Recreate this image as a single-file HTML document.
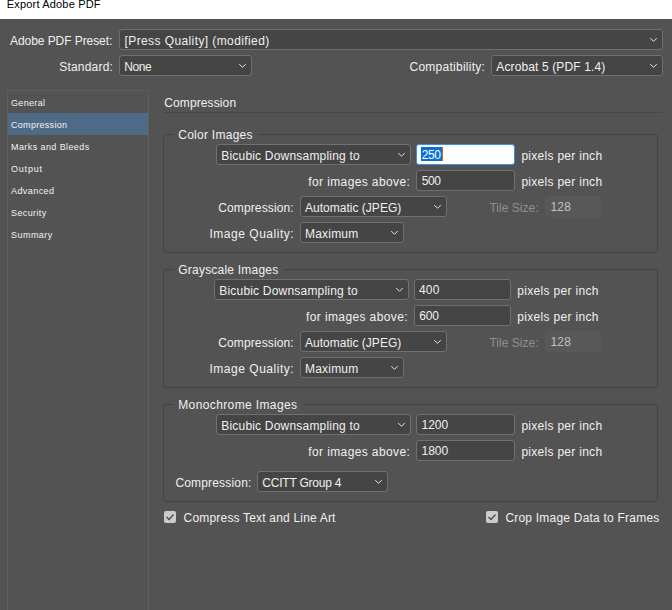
<!DOCTYPE html>
<html><head><meta charset="utf-8">
<style>
*{margin:0;padding:0;box-sizing:border-box}
html,body{width:672px;height:610px;overflow:hidden;background:#535353;font-family:"Liberation Sans",sans-serif}
.a{position:absolute}
.t{position:absolute;white-space:nowrap}
.dd{position:absolute;background:#454545;border:1px solid #707070;border-radius:3px}
.focus{background:#fff;border:1px solid #3d8fef;border-radius:3px}
.dis{background:#585858;border-radius:3px}
.grp{position:absolute;border:1px solid #444444;border-radius:3px}
.side{border:1px solid #5e5e5e;background:#535353}
.cb{position:absolute;width:12px;height:12px;background:#cbcbcb;border-radius:2px}
</style></head><body>
<div class="a" style="left:0;top:0;width:672px;height:19px;background:#fff"></div>
<div class="dd" style="left:119px;top:29px;width:544px;height:21px"></div>
<div class="dd" style="left:119px;top:55px;width:133px;height:21px"></div>
<div class="dd" style="left:491px;top:55px;width:172px;height:21px"></div>
<div class="a side" style="left:7px;top:90px;width:142px;height:530px"></div>
<div class="a" style="left:8px;top:113px;width:140px;height:22px;background:#4f6a87"></div>
<div class="a" style="left:163px;top:112px;width:500px;height:1px;background:#484848"></div>
<div class="grp" style="left:163px;top:134px;width:495px;height:119px"></div>
<div class="a" style="left:174px;top:132px;width:84px;height:4px;background:#535353"></div>
<div class="dd" style="left:216px;top:144px;width:195px;height:21px"></div>
<div class="a focus" style="left:416px;top:144px;width:99px;height:21px"></div>
<div class="a" style="left:421px;top:147px;width:21px;height:14px;background:#0a70d8"></div>
<div class="a" style="left:442px;top:147px;width:1px;height:14px;background:#d66a1a"></div>
<div class="dd" style="left:416px;top:170px;width:99px;height:21px"></div>
<div class="dd" style="left:300px;top:196px;width:147px;height:21px"></div>
<div class="a dis" style="left:545px;top:196px;width:56px;height:21px"></div>
<div class="dd" style="left:300px;top:222px;width:104px;height:21px"></div>
<div class="grp" style="left:163px;top:269px;width:495px;height:119px"></div>
<div class="a" style="left:174px;top:267px;width:110px;height:4px;background:#535353"></div>
<div class="dd" style="left:214px;top:279px;width:195px;height:21px"></div>
<div class="dd" style="left:414px;top:279px;width:97px;height:21px"></div>
<div class="dd" style="left:414px;top:305px;width:97px;height:21px"></div>
<div class="dd" style="left:300px;top:331px;width:147px;height:21px"></div>
<div class="a dis" style="left:545px;top:331px;width:56px;height:21px"></div>
<div class="dd" style="left:300px;top:357px;width:104px;height:21px"></div>
<div class="grp" style="left:163px;top:404px;width:495px;height:98px"></div>
<div class="a" style="left:174px;top:402px;width:129px;height:4px;background:#535353"></div>
<div class="dd" style="left:216px;top:414px;width:195px;height:21px"></div>
<div class="dd" style="left:416px;top:414px;width:99px;height:21px"></div>
<div class="dd" style="left:416px;top:440px;width:99px;height:21px"></div>
<div class="dd" style="left:257px;top:471px;width:131px;height:21px"></div>
<div class="cb" style="left:164px;top:511px"></div>
<div class="cb" style="left:486px;top:511px"></div>
<div class="t" style="left:6.80px;top:-1px;font-size:11px;line-height:11px;letter-spacing:0.174px;color:#000">Export Adobe PDF</div>
<div class="t" style="left:10.00px;top:35px;font-size:12px;line-height:12px;letter-spacing:-0.066px;color:#f0f0f0">Adobe PDF Preset:</div>
<div class="t" style="left:124.50px;top:35px;font-size:12px;line-height:12px;letter-spacing:0.402px;color:#f0f0f0">[Press Quality] (modified)</div>
<div class="t" style="left:59.30px;top:61px;font-size:12px;line-height:12px;letter-spacing:0.187px;color:#f0f0f0">Standard:</div>
<div class="t" style="left:124.25px;top:61px;font-size:12px;line-height:12px;letter-spacing:-0.421px;color:#f0f0f0">None</div>
<div class="t" style="left:409.50px;top:61px;font-size:12px;line-height:12px;letter-spacing:0.255px;color:#f0f0f0">Compatibility:</div>
<div class="t" style="left:496.25px;top:61px;font-size:12px;line-height:12px;letter-spacing:0.127px;color:#f0f0f0">Acrobat 5 (PDF 1.4)</div>
<div class="t" style="left:11.00px;top:99px;font-size:9px;line-height:9px;letter-spacing:0.330px;color:#f2f2f2">General</div>
<div class="t" style="left:11.00px;top:121px;font-size:9px;line-height:9px;letter-spacing:0.299px;color:#f2f2f2">Compression</div>
<div class="t" style="left:11.00px;top:143px;font-size:9px;line-height:9px;letter-spacing:0.411px;color:#f2f2f2">Marks and Bleeds</div>
<div class="t" style="left:11.00px;top:165px;font-size:9px;line-height:9px;letter-spacing:0.797px;color:#f2f2f2">Output</div>
<div class="t" style="left:11.00px;top:187px;font-size:9px;line-height:9px;letter-spacing:0.425px;color:#f2f2f2">Advanced</div>
<div class="t" style="left:11.00px;top:209px;font-size:9px;line-height:9px;letter-spacing:0.384px;color:#f2f2f2">Security</div>
<div class="t" style="left:11.00px;top:231px;font-size:9px;line-height:9px;letter-spacing:0.466px;color:#f2f2f2">Summary</div>
<div class="t" style="left:164.30px;top:97px;font-size:12px;line-height:12px;letter-spacing:0.108px;color:#f0f0f0">Compression</div>
<div class="t" style="left:178.25px;top:129px;font-size:12px;line-height:12px;letter-spacing:0.263px;color:#f0f0f0">Color Images</div>
<div class="t" style="left:221.25px;top:150px;font-size:12px;line-height:12px;letter-spacing:0.198px;color:#f0f0f0">Bicubic Downsampling to</div>
<div class="t" style="left:421.75px;top:149px;font-size:12px;line-height:12px;letter-spacing:-0.424px;color:#ffffff">250</div>
<div class="t" style="left:521.40px;top:150px;font-size:12px;line-height:12px;letter-spacing:0.283px;color:#f0f0f0">pixels per inch</div>
<div class="t" style="left:308.25px;top:176px;font-size:12px;line-height:12px;letter-spacing:0.387px;color:#f0f0f0">for images above:</div>
<div class="t" style="left:421.75px;top:175px;font-size:12px;line-height:12px;letter-spacing:-0.424px;color:#f0f0f0">500</div>
<div class="t" style="left:521.40px;top:176px;font-size:12px;line-height:12px;letter-spacing:0.283px;color:#f0f0f0">pixels per inch</div>
<div class="t" style="left:218.25px;top:202px;font-size:12px;line-height:12px;letter-spacing:0.119px;color:#f0f0f0">Compression:</div>
<div class="t" style="left:305.00px;top:202px;font-size:12px;line-height:12px;letter-spacing:0.015px;color:#f0f0f0">Automatic (JPEG)</div>
<div class="t" style="left:489.40px;top:202px;font-size:12px;line-height:12px;letter-spacing:0.037px;color:#8f8f8f">Tile Size:</div>
<div class="t" style="left:550.40px;top:201px;font-size:12px;line-height:12px;letter-spacing:0.251px;color:#c2c2c2">128</div>
<div class="t" style="left:209.50px;top:228px;font-size:12px;line-height:12px;letter-spacing:0.517px;color:#f0f0f0">Image Quality:</div>
<div class="t" style="left:305.00px;top:228px;font-size:12px;line-height:12px;letter-spacing:0.207px;color:#f0f0f0">Maximum</div>
<div class="t" style="left:178.25px;top:264px;font-size:12px;line-height:12px;letter-spacing:0.220px;color:#f0f0f0">Grayscale Images</div>
<div class="t" style="left:219.25px;top:285px;font-size:12px;line-height:12px;letter-spacing:0.198px;color:#f0f0f0">Bicubic Downsampling to</div>
<div class="t" style="left:419.00px;top:284px;font-size:12px;line-height:12px;letter-spacing:0.201px;color:#f0f0f0">400</div>
<div class="t" style="left:517.25px;top:285px;font-size:12px;line-height:12px;letter-spacing:0.319px;color:#f0f0f0">pixels per inch</div>
<div class="t" style="left:306.00px;top:311px;font-size:12px;line-height:12px;letter-spacing:0.387px;color:#f0f0f0">for images above:</div>
<div class="t" style="left:419.30px;top:310px;font-size:12px;line-height:12px;letter-spacing:-0.224px;color:#f0f0f0">600</div>
<div class="t" style="left:517.25px;top:311px;font-size:12px;line-height:12px;letter-spacing:0.319px;color:#f0f0f0">pixels per inch</div>
<div class="t" style="left:218.25px;top:337px;font-size:12px;line-height:12px;letter-spacing:0.119px;color:#f0f0f0">Compression:</div>
<div class="t" style="left:305.00px;top:337px;font-size:12px;line-height:12px;letter-spacing:0.015px;color:#f0f0f0">Automatic (JPEG)</div>
<div class="t" style="left:489.40px;top:337px;font-size:12px;line-height:12px;letter-spacing:0.037px;color:#8f8f8f">Tile Size:</div>
<div class="t" style="left:550.40px;top:336px;font-size:12px;line-height:12px;letter-spacing:0.251px;color:#c2c2c2">128</div>
<div class="t" style="left:209.50px;top:363px;font-size:12px;line-height:12px;letter-spacing:0.517px;color:#f0f0f0">Image Quality:</div>
<div class="t" style="left:305.00px;top:363px;font-size:12px;line-height:12px;letter-spacing:0.207px;color:#f0f0f0">Maximum</div>
<div class="t" style="left:178.25px;top:399px;font-size:12px;line-height:12px;letter-spacing:0.377px;color:#f0f0f0">Monochrome Images</div>
<div class="t" style="left:221.25px;top:420px;font-size:12px;line-height:12px;letter-spacing:0.198px;color:#f0f0f0">Bicubic Downsampling to</div>
<div class="t" style="left:421.50px;top:419px;font-size:12px;line-height:12px;letter-spacing:-0.007px;color:#f0f0f0">1200</div>
<div class="t" style="left:521.40px;top:420px;font-size:12px;line-height:12px;letter-spacing:0.283px;color:#f0f0f0">pixels per inch</div>
<div class="t" style="left:308.25px;top:446px;font-size:12px;line-height:12px;letter-spacing:0.387px;color:#f0f0f0">for images above:</div>
<div class="t" style="left:421.50px;top:445px;font-size:12px;line-height:12px;letter-spacing:-0.007px;color:#f0f0f0">1800</div>
<div class="t" style="left:521.40px;top:446px;font-size:12px;line-height:12px;letter-spacing:0.283px;color:#f0f0f0">pixels per inch</div>
<div class="t" style="left:175.40px;top:477px;font-size:12px;line-height:12px;letter-spacing:0.173px;color:#f0f0f0">Compression:</div>
<div class="t" style="left:262.30px;top:477px;font-size:12px;line-height:12px;letter-spacing:-0.220px;color:#f0f0f0">CCITT Group 4</div>
<div class="t" style="left:183.60px;top:512px;font-size:12px;line-height:12px;letter-spacing:0.187px;color:#f0f0f0">Compress Text and Line Art</div>
<div class="t" style="left:505.40px;top:512px;font-size:12px;line-height:12px;letter-spacing:0.216px;color:#f0f0f0">Crop Image Data to Frames</div>
<svg class="a" style="left:0;top:0" width="672" height="610" viewBox="0 0 672 610">
<g stroke="#e2e2e2" stroke-width="1.0" fill="none" stroke-linecap="round" stroke-linejoin="round"><path d="M650.5 38.3 L653.5 41.3 L656.5 38.3"/><path d="M239.5 64.3 L242.5 67.3 L245.5 64.3"/><path d="M650.5 64.3 L653.5 67.3 L656.5 64.3"/><path d="M398.5 153.3 L401.5 156.3 L404.5 153.3"/><path d="M434.5 205.3 L437.5 208.3 L440.5 205.3"/><path d="M391.5 231.3 L394.5 234.3 L397.5 231.3"/><path d="M396.5 288.3 L399.5 291.3 L402.5 288.3"/><path d="M434.5 340.3 L437.5 343.3 L440.5 340.3"/><path d="M391.5 366.3 L394.5 369.3 L397.5 366.3"/><path d="M398.5 423.3 L401.5 426.3 L404.5 423.3"/><path d="M375.5 480.3 L378.5 483.3 L381.5 480.3"/></g>
<g stroke="#4a4a4a" stroke-width="1.3" fill="none"><path d="M166.5 517 L169 519.5 L173.5 514.5"/><path d="M488.5 517 L491 519.5 L495.5 514.5"/></g>
</svg>
</body></html>
